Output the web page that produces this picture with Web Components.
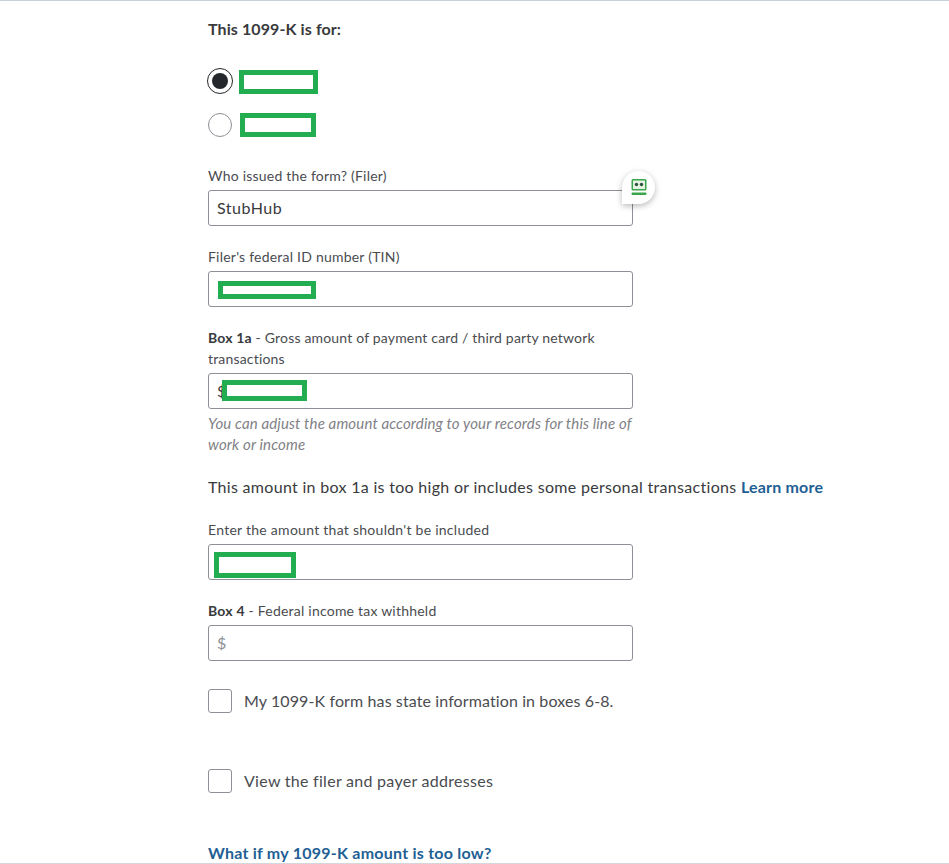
<!DOCTYPE html>
<html><head><meta charset="utf-8"><title>1099-K</title>
<style>
html,body{margin:0;padding:0;background:#fff}
body{font-family:Lato,"Open Sans",sans-serif;color:#393a3d;height:864px;overflow:hidden;box-sizing:border-box;border-top:1px solid #c9d1d6;border-bottom:1px solid #d4d7dc}
</style></head><body>
<template id="t-page"><style>
:host{display:block;width:425px;margin-left:208px;padding-top:18px;position:relative}
</style><slot></slot></template>

<template id="t-radio"><style>
:host{display:flex;align-items:center;gap:var(--g,6px);height:26px}
.o{width:24px;height:24px;box-sizing:border-box;border:1px solid #8d9096;border-radius:50%;background:#fff;display:flex;align-items:center;justify-content:center;flex:none}
:host([checked]) .o{width:26px;height:26px;margin-left:-1px;border-color:#24282d;border-width:1.5px}
:host([checked]) .o::after{content:"";width:16px;height:16px;border-radius:50%;background:#24282d}
:host([checked]) .r{margin-top:2px}
.r{box-sizing:border-box;border:5px solid #22ad50;background:#fff;height:24px;width:var(--w,79px)}
</style><span class="o"></span><span class="r"></span></template>

<template id="t-field"><style>
:host{display:block;font-size:14px;line-height:21px;color:#4a4c50;letter-spacing:var(--ls,.22px)}
.l{display:block;margin-bottom:4px}
::slotted(b){color:#393a3d}
.i{position:relative;box-sizing:border-box;height:36px;border:1px solid #8d9096;border-radius:3px;background:#fff;display:flex;align-items:center;padding:0 8px 2px;font-size:16px;letter-spacing:.5px;color:#393a3d}
.v:empty{display:none}
:host([ph]) .i{color:#8d9096}
.r{position:absolute;box-sizing:border-box;border:5px solid #22ad50;background:#fff;left:var(--rx);top:var(--ry);width:var(--rw);height:var(--rh)}
:host(:not([red])) .r{display:none}
</style><span class="l"><slot></slot></span><div class="i"><span class="v"></span><span class="r"></span></div></template>

<template id="t-check"><style>
:host{display:flex;align-items:center;gap:12px;font-size:16px;line-height:24px;color:#4a4c50}
.b{width:24px;height:24px;box-sizing:border-box;border:1px solid #8d9096;border-radius:3px;background:#fff;flex:none}
</style><span class="b"></span><span><slot></slot></span></template>

<template id="t-helper"><style>
:host{position:absolute;left:414px;top:170px;width:33px;height:33px;border-radius:50% 50% 50% 0;background:#fff;box-shadow:0 2px 6px rgba(0,0,0,.28);display:flex;align-items:center;justify-content:center}
svg{display:block}
</style><svg width="16" height="17" viewBox="0 0 16 17"><rect x="0.5" y="0" width="15" height="11.500" rx="1.500" fill="#3aa54a"/><rect x="2" y="1.500" width="12" height="8.500" fill="#e4f3e4"/><circle cx="5.500" cy="5.500" r="1.700" fill="#30523a"/><circle cx="10.500" cy="5.500" r="1.700" fill="#30523a"/><rect x="0.5" y="13.500" width="15" height="2.500" rx="1" fill="#3aa54a"/></svg></template>

<tax-page>
<div style="font-size:16px;line-height:20px;font-weight:700;color:#393a3d;letter-spacing:.1px">This 1099-K is for:</div>
<div style="display:flex;flex-direction:column;gap:18px;margin-top:29px">
<tax-radio checked></tax-radio>
<tax-radio style="--g:8px;--w:76px"></tax-radio>
</div>
<tax-field val="StubHub" style="margin-top:27px">Who issued the form? (Filer)</tax-field>
<tax-field red style="margin-top:20px;--rx:9px;--ry:9px;--rw:98px;--rh:18px">Filer's federal ID number (TIN)</tax-field>
<tax-field val="$" red style="margin-top:20px;--ls:.18px;--rx:13px;--ry:6px;--rw:85px;--rh:21px"><b>Box 1a</b> - Gross amount of payment card / third party network transactions</tax-field>
<div style="font-size:15px;line-height:21px;font-style:italic;color:#7f8186;margin-top:4px;letter-spacing:.14px">You can adjust the amount according to your records for this line of work or income</div>
<div style="font-size:16px;line-height:24px;margin-top:20px;white-space:nowrap;color:#393a3d;letter-spacing:.3px">This amount in box 1a is too high or includes some personal transactions <a style="color:#1f5f94;font-weight:700;text-decoration:none;letter-spacing:.2px">Learn more</a></div>
<tax-field red style="margin-top:20px;--ls:.27px;--rx:5px;--ry:7px;--rw:82px;--rh:26px">Enter the amount that shouldn't be included</tax-field>
<tax-field val="$" ph style="margin-top:20px"><b>Box 4</b> - Federal income tax withheld</tax-field>
<tax-check style="margin-top:28px;letter-spacing:.11px">My 1099-K form has state information in boxes 6-8.</tax-check>
<tax-check style="margin-top:56px;letter-spacing:.28px">View the filer and payer addresses</tax-check>
<div style="font-size:16px;line-height:24px;font-weight:700;color:#1f5f94;margin-top:48px;letter-spacing:.24px">What if my 1099-K amount is too low?</div>
<tax-helper></tax-helper>
</tax-page>
<script>
function def(name,tid,init){customElements.define(name,class extends HTMLElement{constructor(){super();this.attachShadow({mode:"open"}).appendChild(document.getElementById(tid).content.cloneNode(true));}connectedCallback(){if(init)init(this)}})}
def("tax-page","t-page");def("tax-radio","t-radio");def("tax-check","t-check");def("tax-helper","t-helper");
def("tax-field","t-field",e=>{e.shadowRoot.querySelector(".v").textContent=e.getAttribute("val")||""});
</script>
</body></html>
